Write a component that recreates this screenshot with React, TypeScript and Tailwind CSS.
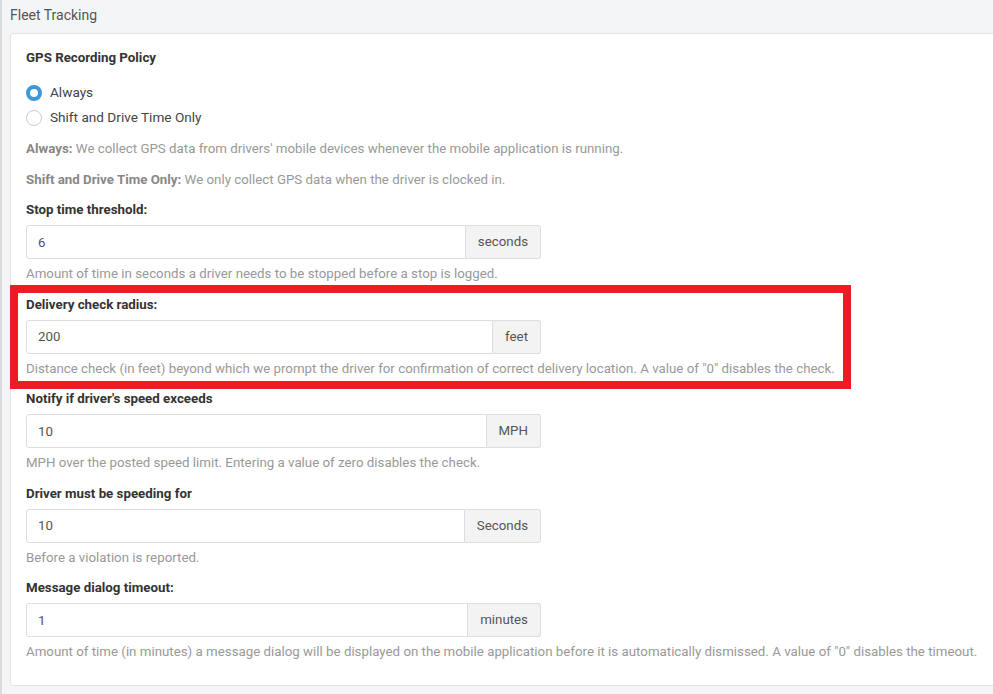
const font = { fontFamily: "Roboto, 'Open Sans', Arial, sans-serif" };

interface FieldProps {
  label: string;
  value: string;
  unit: string;
  help: string;
  highlight?: boolean;
}

function Field({ label, value, unit, help, highlight }: FieldProps) {
  return (
    <div className="relative pb-[12.5px]">
      <div className="text-[13.3px] font-bold leading-[18px] text-[#333] mb-[6px]">{label}</div>
      <div className="flex w-[515px] h-[34px]">
        <input
          className="flex-1 min-w-0 h-full rounded-l-[3px] border border-[#ddd] bg-white pl-[11px] pr-3 text-[13.3px] text-[#555] outline-none"
          defaultValue={value}
        />
        <span className="flex items-center h-full px-3 rounded-r-[3px] border border-l-0 border-[#ddd] bg-[#f3f3f3] text-[13.3px] text-[#555]">
          {unit}
        </span>
      </div>
      <div className="mt-[6px] text-[13.3px] leading-[18px] text-[#999] whitespace-nowrap">{help}</div>
      {highlight && (
        <div className="absolute left-[-16px] top-[-11px] w-[841px] h-[104px] border-[8px] border-[#ed1c24] pointer-events-none" />
      )}
    </div>
  );
}

function Radio({ checked, label }: { checked?: boolean; label: string }) {
  return (
    <label className="flex items-center h-[25px] gap-2">
      {checked ? (
        <span className="w-4 h-4 rounded-full border-[4px] border-[#3a9ad9] bg-white" />
      ) : (
        <span className="w-4 h-4 rounded-full border border-[#ccc] bg-white" />
      )}
      <span className="text-[13.6px] text-[#444]">{label}</span>
    </label>
  );
}

export default function App() {
  return (
    <div className="w-[993px] h-[694px] overflow-hidden bg-[#f4f5f7] border-l-2 border-[#dcdcdc]" style={font}>
      <div className="pl-2 h-[30px] flex items-center text-sm text-[#555]">Fleet Tracking</div>
      <div className="ml-2 mt-[3px] w-[1000px] h-[653px] rounded-[3px] border border-[#e3e3e3] bg-white pl-[15px] pt-[15px]">
        <div className="text-[13.3px] font-bold leading-[18px] text-[#333]">GPS Recording Policy</div>
        <div className="mt-[13px]">
          <Radio checked label="Always" />
          <Radio label="Shift and Drive Time Only" />
        </div>
        <p className="mt-[10px] text-[13.3px] leading-[18px] text-[#999]">
          <b className="text-[#888]">Always:</b> We collect GPS data from drivers' mobile devices whenever the mobile application is running.
        </p>
        <p className="mt-[13px] text-[13.3px] leading-[18px] text-[#999]">
          <b className="text-[#888]">Shift and Drive Time Only:</b> We only collect GPS data when the driver is clocked in.
        </p>
        <div className="mt-[12px]">
          <Field
            label="Stop time threshold:"
            value="6"
            unit="seconds"
            help="Amount of time in seconds a driver needs to be stopped before a stop is logged."
          />
          <Field
            label="Delivery check radius:"
            value="200"
            unit="feet"
            help={'Distance check (in feet) beyond which we prompt the driver for confirmation of correct delivery location. A value of "0" disables the check.'}
            highlight
          />
          <Field
            label="Notify if driver's speed exceeds"
            value="10"
            unit="MPH"
            help="MPH over the posted speed limit. Entering a value of zero disables the check."
          />
          <Field
            label="Driver must be speeding for"
            value="10"
            unit="Seconds"
            help="Before a violation is reported."
          />
          <Field
            label="Message dialog timeout:"
            value="1"
            unit="minutes"
            help={'Amount of time (in minutes) a message dialog will be displayed on the mobile application before it is automatically dismissed. A value of "0" disables the timeout.'}
          />
        </div>
      </div>
    </div>
  );
}
